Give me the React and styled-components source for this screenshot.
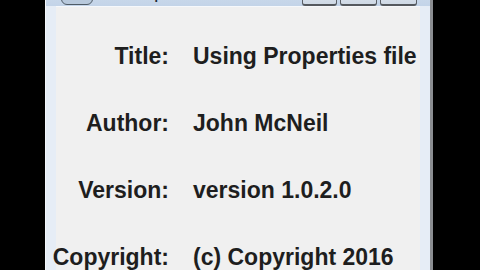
import React from 'react';
import styled, { createGlobalStyle } from 'styled-components';

const GlobalStyle = createGlobalStyle`
  html, body {
    margin: 0;
    padding: 0;
    background: #000;
    overflow: hidden;
  }
  #root {
    width: 480px;
    height: 270px;
    overflow: hidden;
  }
`;

const rows = [
  { label: 'Title:', value: 'Using Properties file' },
  { label: 'Author:', value: 'John McNeil' },
  { label: 'Version:', value: 'version 1.0.2.0' },
  { label: 'Copyright:', value: '(c) Copyright 2016' },
];

const App = () => {
  return (
    <>
      <GlobalStyle />
      <Screen>
        <Window>
          <TitleBar>
            <AppIcon />
            <Caption>Properties</Caption>
            <Controls>
              <CtrlButton />
              <CtrlButton wide />
              <CtrlButton wide />
            </Controls>
          </TitleBar>
          <Panel>
            {rows.map((r) => (
              <Row key={r.label}>
                <Label>{r.label}</Label>
                <Value>{r.value}</Value>
              </Row>
            ))}
          </Panel>
        </Window>
        <Shadow />
      </Screen>
    </>
  );
};

// Styled Components
const Screen = styled.div`
  display: flex;
  width: 480px;
  height: 270px;
  padding-left: 45px;
  box-sizing: border-box;
`;

const Window = styled.div`
  display: flex;
  flex-direction: column;
  width: 385px;
  height: 300px;
  margin-top: -22px;
  background: #e6edf6;
  padding: 0 10px;
  box-sizing: border-box;
  border-left: 1px solid #f4f7fb;
`;

const Shadow = styled.div`
  width: 3px;
  height: 270px;
  background: #8a8d91;
`;

const TitleBar = styled.div`
  display: flex;
  align-items: flex-start;
  height: 30px;
  background: linear-gradient(to bottom, #d6e2f0, #c3d4e8);
  margin: 0 -10px;
  padding: 0 13px 0 15px;
  box-sizing: border-box;
`;

const AppIcon = styled.div`
  width: 32px;
  height: 26px;
  margin-top: 1px;
  border: 1px solid #4f5b66;
  border-radius: 0 0 6px 6px;
  background: #b8c9dc;
  box-sizing: border-box;
`;

const Caption = styled.span`
  margin-left: 30px;
  margin-top: 2px;
  font-family: 'Liberation Sans', Arial, sans-serif;
  font-size: 20px;
  line-height: 23px;
  color: #1d2a38;
`;

const Controls = styled.div`
  display: flex;
  gap: 3px;
  margin-left: auto;
  margin-top: 7px;
`;

const CtrlButton = styled.div`
  width: ${(p) => (p.wide ? '37px' : '35px')};
  height: 21px;
  background: linear-gradient(to bottom, #e4ebf3, #cfd9e5);
  border: 1px solid #5a5f66;
  border-top: none;
  border-bottom: 2px solid #55595e;
  border-radius: 0 0 3px 3px;
  box-sizing: border-box;
`;

const Panel = styled.div`
  display: grid;
  grid-template-columns: 113px auto;
  grid-auto-rows: 67px;
  column-gap: 24px;
  align-content: start;
  flex: 1;
  background: #f0f0f0;
  padding-top: 16px;
  border-top: 1px solid #f6f8fb;
`;

const Row = styled.div`
  display: contents;
`;

const Label = styled.div`
  display: flex;
  align-items: center;
  justify-content: flex-end;
  font-family: 'Liberation Sans', Arial, sans-serif;
  font-weight: 700;
  font-size: 23px;
  color: #1e1e1e;
  white-space: nowrap;
`;

const Value = styled.div`
  display: flex;
  align-items: center;
  font-family: 'Liberation Sans', Arial, sans-serif;
  font-weight: 700;
  font-size: 23px;
  color: #1e1e1e;
  white-space: nowrap;
`;

export default App;
